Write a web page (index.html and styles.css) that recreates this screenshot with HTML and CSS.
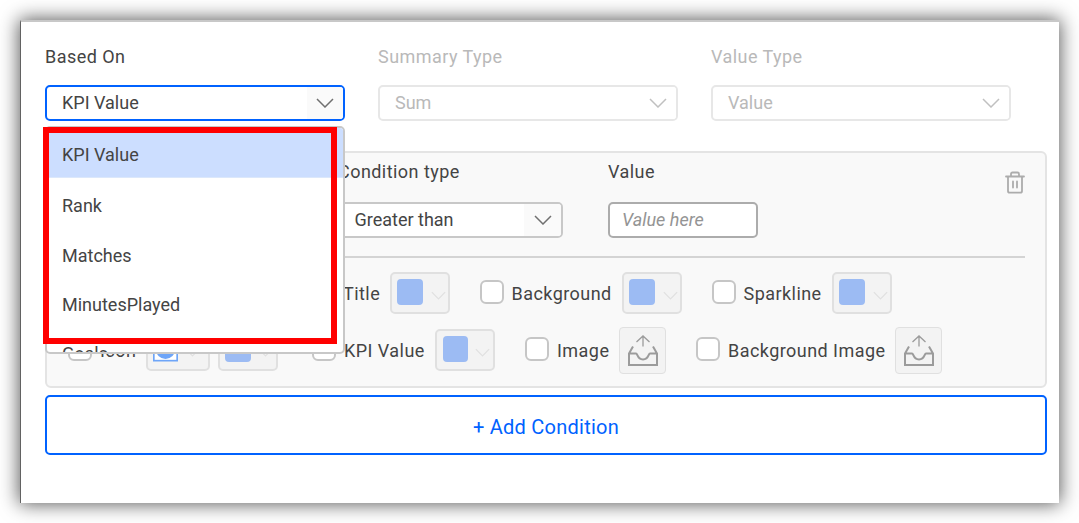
FILE: index.html
```html
<!DOCTYPE html>
<html lang="en">
<head>
<meta charset="utf-8">
<title>Conditions</title>
<link rel="stylesheet" href="styles.css">
</head>
<body>
<svg class="defs" width="0" height="0">
  <symbol id="chevron" viewBox="0 0 18 10"><path d="M1 1l8 8 8-8" fill="none" stroke="currentColor" stroke-width="1.5"/></symbol>
  <symbol id="upload" viewBox="0 0 32 32"><g fill="none" stroke="currentColor"><path d="M16 12.500V2M9.500 8l6.500-6 6.500 6" stroke-width="1.300"/><path d="M6 12.500L2 19.500V31h28V19.500L26 12.500M2 19.500h7c1.800 0 1 6 7 6s5.200-6 7-6h7" stroke-width="2"/></g></symbol>
</svg>
<main class="panel">
  <section class="fields">
    <div class="field">
      <label class="label">Based On</label>
      <div class="select active"><span>KPI Value</span><i class="arrow"><svg><use href="#chevron"/></svg></i></div>
      <div class="menu">
        <div class="item selected">KPI Value</div><div class="item">Rank</div><div class="item">Matches</div><div class="item last">MinutesPlayed</div><div class="item next">Goals</div>
      </div>
      <div class="highlight"></div>
    </div>
    <div class="field disabled">
      <label class="label">Summary Type</label>
      <div class="select"><span>Sum</span><i class="arrow"><svg><use href="#chevron"/></svg></i></div>
    </div>
    <div class="field disabled">
      <label class="label">Value Type</label>
      <div class="select"><span>Value</span><i class="arrow"><svg><use href="#chevron"/></svg></i></div>
    </div>
  </section>
  <section class="card">
    <div class="condition">
      <div class="type"><label class="label">Condition type</label><div class="select"><span>Greater than</span><i class="arrow"><svg><use href="#chevron"/></svg></i></div></div>
      <div class="value"><label class="label">Value</label><input class="input" placeholder="Value here"></div>
      <svg class="trash" viewBox="0 0 20 23"><g fill="none" stroke="currentColor" stroke-width="1.800" stroke-linecap="round"><path d="M1 5.500h18M6 5V3q0-1.500 1.500-1.500h5Q14 1.500 14 3v2M3 6v14q0 1.700 1.700 1.700h10.600q1.700 0 1.700-1.700V6M8 10.500v6M12 10.500v6"/></g></svg>
    </div>
    <div class="options first">
      <div class="option title"><i class="check"></i><span>Title</span><div class="color"><i></i><svg><use href="#chevron"/></svg></div></div>
      <div class="option background"><i class="check"></i><span>Background</span><div class="color"><i></i><svg><use href="#chevron"/></svg></div></div>
      <div class="option"><i class="check"></i><span>Sparkline</span><div class="color"><i></i><svg><use href="#chevron"/></svg></div></div>
    </div>
    <div class="options second">
      <div class="option icon"><i class="check"></i><span>Icon</span><div class="color shape"><svg class="disc" viewBox="0 0 24 24"><rect x=".8" y=".8" width="22.400" height="22.400" fill="#fff" stroke="#6ea5f8" stroke-width="1.600"/><circle cx="12" cy="12" r="9.500" fill="#6ea5f8"/></svg><svg><use href="#chevron"/></svg></div><div class="color extra"><i></i><svg><use href="#chevron"/></svg></div></div>
      <div class="option kpi"><i class="check"></i><span>KPI Value</span><div class="color"><i></i><svg><use href="#chevron"/></svg></div></div>
      <div class="option image"><i class="check"></i><span>Image</span><div class="upload"><svg><use href="#upload"/></svg></div></div>
      <div class="option"><i class="check"></i><span>Background Image</span><div class="upload"><svg><use href="#upload"/></svg></div></div>
    </div>
  </section>
  <button class="add">+ Add Condition</button>
</main>
</body>
</html>
```

FILE: styles.css
```css
* { box-sizing: border-box; }
body { margin: 0; padding: 20px; background: #fff; color: #444; font: 18px/24px Roboto, sans-serif; overflow: hidden; }
.defs { position: absolute; }
.panel { width: 1039px; height: 483px; padding: 23px 12px 0 24px; border-top: 2px solid #c8c8c8; border-left: 1px solid #626262; background: #fff; box-shadow: 0 0 18px 1px rgba(0,0,0,.66); }
.fields { display: flex; gap: 33px; height: 106px; }
.field { position: relative; width: 300px; }
.label { display: block; letter-spacing: .45px; height: 24px; }
.select { display: flex; justify-content: space-between; height: 36px; border: 2px solid #c8c8c8; border-radius: 5px; background: #fff; line-height: 32px; padding-left: 15px; overflow: hidden; }
.field .select { margin-top: 16px; }
.select.active { border-color: #0062ff; }
.arrow { display: grid; place-items: center; width: 36px; background: #fafafa; }
.arrow svg { width: 18px; height: 10px; color: #707070; }
.disabled .label, .disabled .select { color: #b9b9b9; }
.disabled .select { border-color: #e7e7e7; }
.disabled .arrow { background: #fff; }
.disabled .arrow svg { color: #c0c0c0; }
.menu { position: absolute; z-index: 2; top: 81px; left: 0; width: 300px; height: 228px; overflow: hidden; border: 2px solid #c8c8c8; border-radius: 5px; background: #fff; }
.item { height: 50px; padding-left: 15px; line-height: 56px; }
.item.selected { background: #ccdeff; line-height: 53px; border-bottom: 1px solid #dce8fb; }
.item.last { line-height: 54px; }
.item.next { line-height: 52px; }
.highlight { position: absolute; z-index: 3; top: 82px; left: -2px; width: 294px; height: 217px; border: 6px solid #f00; }
.card { width: 1002px; height: 237px; padding: 7px 20px; border: 2px solid #e4e4e4; border-radius: 6px; background: #f9f9f9; }
.condition { display: flex; height: 98px; padding-left: 271px; border-bottom: 2px solid #d4d4d4; }
.type { width: 225px; margin-right: 45px; }
.type .select, .input { margin-top: 18px; }
.type .select { padding-left: 14.5px; }
.type .arrow { width: 37px; }
.value { width: 150px; }
.input { display: block; width: 150px; height: 36px; padding: 0 12px 2px; border: 2px solid #acacac; border-radius: 5px; font: italic 18px Roboto, sans-serif; background: #fff; }
.input::placeholder { color: #949494; opacity: 1; }
.trash { width: 20px; height: 23px; margin: 11px 0 0 auto; color: #acacac; }
.options { display: flex; align-items: center; letter-spacing: .45px; }
.first { height: 42px; margin-top: 14px; padding-left: 245px; gap: 30px; }
.second { height: 48px; margin-top: 12px; }
.option { display: flex; align-items: center; height: 42px; }
.option > span { margin: 2px 0 0 8px; white-space: nowrap; }
.check { flex: none; width: 24px; height: 24px; margin-top: -3px; border: 2px solid #c6c6c6; border-radius: 6px; background: #fff; }
.first .option > span { margin-left: 7.5px; }
.first .title > span { margin-left: 7px; }
.color { display: flex; flex: none; width: 60px; height: 42px; padding: 5px; border: 2px solid #e0e0e0; border-radius: 5px; background: #f3f3f3; margin-left: auto; }
.color i { flex: none; width: 26px; height: 26px; border-radius: 4px; background: #9cbbf3; }
.kpi .color { padding-left: 6px; }
.kpi .color i { width: 25px; }
.color svg { flex: none; width: 15px; height: 9px; margin: 12px 0 0 7px; color: #e0e0e0; }
.first .color svg { margin-left: 8px; }
.title { width: 138px; }
.background { width: 202px; }
.title + .background + .option { width: 180px; }
.icon { width: 210px; margin-left: 1px; }
.color.shape { width: 64px; margin-left: auto; }
.color .disc { width: 25px; height: 26px; margin: 0; }
.color.extra { margin-left: 8px; }
.kpi { width: 183px; margin-left: 34px; }
.image { width: 141px; margin-left: 30px; }
.image + .option { width: 246px; margin-left: 30px; }
.upload { display: grid; place-items: center; width: 47px; height: 47px; margin-left: auto; border: 1px solid #e0e0e0; border-radius: 4px; background: #f3f3f3; }
.upload svg { width: 32px; height: 32px; color: #9b9b9b; }
.add { display: block; width: 1002px; height: 60px; margin-top: 7px; padding: 4px 0 0; border: 2px solid #0062ff; border-radius: 5px; background: #fff; color: #0062ff; font: 20px Roboto, sans-serif; letter-spacing: .25px; }
```
